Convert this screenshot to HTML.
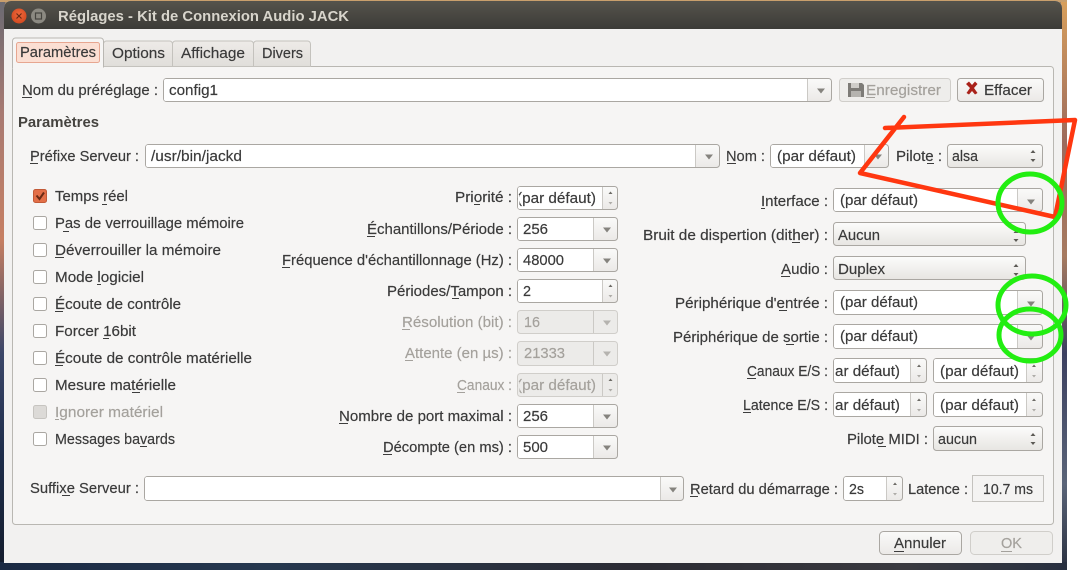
<!DOCTYPE html>
<html lang="fr"><head><meta charset="utf-8"><title>Réglages - Kit de Connexion Audio JACK</title>
<style>
html,body{margin:0;padding:0;background:#fff;width:1088px;height:576px;overflow:hidden}
svg{display:block}
text{font-family:"Liberation Sans",sans-serif;font-size:15px;fill:#3a3a3a;stroke:#3a3a3a;stroke-width:.18}
.d{fill:#a4a19c;stroke:#a4a19c}
.b{font-weight:bold;fill:#45433f;stroke:none}
.t{font-weight:bold;fill:#d8d5cc;stroke:none;font-size:14.5px}
.u{stroke:#3d3d3d;stroke-width:1;fill:none}
.ud{stroke:#a4a19c;stroke-width:1;fill:none}
.o{stroke:#aaa7a2;fill:url(#g)}
.s{stroke:#aaa7a2;fill:url(#g2)}
.od{stroke:#d0ceca;fill:#ecebe9}
.w{fill:#fff}
.l{stroke:#cbc9c5;stroke-width:1}
.cb{fill:#fff;stroke:#aaa7a2}
</style></head><body>
<svg xmlns="http://www.w3.org/2000/svg" width="1088" height="576" viewBox="0 0 1088 576">
<defs>
<linearGradient id="bgl" x1="0" y1="0" x2="0" y2="1"><stop offset="0" stop-color="#6a6a72"/><stop offset=".2" stop-color="#a87a72"/><stop offset=".42" stop-color="#c67f62"/><stop offset=".62" stop-color="#3b4668"/><stop offset=".8" stop-color="#1d2c4a"/><stop offset="1" stop-color="#141c2c"/></linearGradient>
<linearGradient id="bgr" x1="0" y1="0" x2="0" y2="1"><stop offset="0" stop-color="#d8a05c"/><stop offset=".25" stop-color="#9c6a5c"/><stop offset=".45" stop-color="#a67a60"/><stop offset=".62" stop-color="#3c4060"/><stop offset=".85" stop-color="#5a6478"/><stop offset="1" stop-color="#2a3040"/></linearGradient>
<linearGradient id="bgb" x1="0" y1="0" x2="1" y2="0"><stop offset="0" stop-color="#1b2a44"/><stop offset=".25" stop-color="#26384f"/><stop offset=".6" stop-color="#2c2c34"/><stop offset=".85" stop-color="#3a3a40"/><stop offset="1" stop-color="#283040"/></linearGradient>
<linearGradient id="tb" x1="0" y1="0" x2="0" y2="1"><stop offset="0" stop-color="#55534c"/><stop offset="1" stop-color="#3c3b37"/></linearGradient>
<linearGradient id="g" x1="0" y1="0" x2="0" y2="1"><stop offset="0" stop-color="#fafaf9"/><stop offset="1" stop-color="#ebe9e7"/></linearGradient>
<linearGradient id="g2" x1="0" y1="0" x2="0" y2="1"><stop offset="0" stop-color="#fcfcfb"/><stop offset="1" stop-color="#e7e5e2"/></linearGradient>
<linearGradient id="tab" x1="0" y1="0" x2="0" y2="1"><stop offset="0" stop-color="#eeebe8"/><stop offset="1" stop-color="#e0deda"/></linearGradient>
<radialGradient id="rc" cx=".5" cy=".4" r=".6"><stop offset="0" stop-color="#f0683c"/><stop offset="1" stop-color="#d24a20"/></radialGradient>
<path id="ar" d="M-4 -2.500h8l-4 5z" fill="#85837e"/>
<path id="ard" d="M-4 -2.500h8l-4 5z" fill="#b5b3af"/>
<g id="st"><path d="M-2.500 -3l2.500 -3l2.500 3z" fill="#5c5a55"/><path d="M-2.500 3l2.500 3l2.500 -3z" fill="#5c5a55"/></g>
<g id="sp"><path d="M-2 -4l2 -2.500l2 2.500z" fill="#6c6a65"/><path d="M-2 4l2 2.500l2 -2.500z" fill="#aeacA8"/></g>
</defs>

<!-- desktop -->
<rect x="0" y="0" width="1067" height="570" fill="#9d8466"/>
<rect x="0" y="0" width="5" height="570" fill="url(#bgl)"/>
<rect x="1061" y="0" width="6" height="570" fill="url(#bgr)"/>
<rect x="0" y="562" width="1067" height="8" fill="url(#bgb)"/>
<rect x="0" y="0" width="1067" height="2" fill="#c99f6c"/>

<!-- window -->
<path d="M4 563V8a7 7 0 0 1 7-7H1055a7 7 0 0 1 7 7V563z" fill="#f2f1f0"/>
<path d="M4 29V8a7 7 0 0 1 7-7H1055a7 7 0 0 1 7 7V29z" fill="url(#tb)"/>
<circle cx="19" cy="16" r="7.500" fill="url(#rc)"/>
<path d="M16.500 13.500l5 5M21.500 13.500l-5 5" stroke="#6a2a14" stroke-width="1.200"/>
<circle cx="38.500" cy="16" r="7.500" fill="#8b8981"/>
<rect x="35.500" y="13" width="6" height="6" fill="none" stroke="#45443f" stroke-width="1.200"/>
<text class="t" x="58" y="21" textLength="291" lengthAdjust="spacingAndGlyphs">Réglages - Kit de Connexion Audio JACK</text>

<!-- notebook -->
<rect x="12.500" y="66.500" width="1041" height="458" rx="3" fill="#f6f5f4" stroke="#b9b7b2"/>
<path d="M103.500 66.500V44a3 3 0 0 1 3-3H169.500a3 3 0 0 1 3 3V66.500z" fill="url(#tab)" stroke="#c4c2bd"/>
<path d="M172.500 66.500V44a3 3 0 0 1 3-3H250.500a3 3 0 0 1 3 3V66.500z" fill="url(#tab)" stroke="#c4c2bd"/>
<path d="M253.500 66.500V44a3 3 0 0 1 3-3H307.500a3 3 0 0 1 3 3V66.500z" fill="url(#tab)" stroke="#c4c2bd"/>
<path d="M12.500 68V41a3 3 0 0 1 3-3H100.500a3 3 0 0 1 3 3V67.500" fill="#f6f5f4" stroke="#b9b7b2"/>
<rect x="13" y="66" width="90" height="3" fill="#f6f5f4"/>
<rect x="16.500" y="42.500" width="83" height="20" rx="2" fill="#fbdfd3" stroke="#e7a690"/>
<text x="20" y="57" textLength="76" lengthAdjust="spacingAndGlyphs">Paramètres</text>
<text x="112" y="58" textLength="53" lengthAdjust="spacingAndGlyphs">Options</text>
<text x="181" y="58" textLength="64" lengthAdjust="spacingAndGlyphs">Affichage</text>
<text x="262" y="58" textLength="41" lengthAdjust="spacingAndGlyphs">Divers</text>

<!-- preset row -->
<text x="22" y="95" textLength="136" lengthAdjust="spacingAndGlyphs">Nom du préréglage :</text><path class="u" d="M22 97.500h10"/>
<rect class="o" x="163.500" y="78.500" width="668" height="23" rx="3"/><path class="w" d="M166 79h642v22H166a2 2 0 0 1-2-2V81a2 2 0 0 1 2-2z"/><path class="l" d="M807.500 79v22"/><use href="#ar" x="821" y="91"/>
<text x="169" y="95" textLength="49" lengthAdjust="spacingAndGlyphs">config1</text>
<rect x="839.500" y="78.500" width="111" height="23" rx="3" fill="#eeedeb" stroke="#d0ceca"/>
<path d="M848 83h14l2 2v12h-16z" fill="#7d7b77"/><rect x="851" y="83" width="8" height="5" fill="#cfcdc9"/><rect x="851" y="91" width="10" height="6" fill="#b5b3af"/>
<text class="d" x="866" y="95" textLength="75" lengthAdjust="spacingAndGlyphs">Enregistrer</text><path class="ud" d="M866 97.500h9"/>
<rect class="o" x="957.500" y="78.500" width="86" height="23" rx="3"/>
<path d="M966 84l3-2.500l3 3.500l3-3.500l2.500 2.500l-3.500 4l3.500 5l-2.500 1.500l-3-3.500l-3 3.500l-2.500-1.500l3.500-5z" fill="#a9221a"/>
<text x="984" y="95" textLength="48" lengthAdjust="spacingAndGlyphs">Effacer</text>

<text class="b" x="18" y="127" textLength="81" lengthAdjust="spacingAndGlyphs">Paramètres</text>

<!-- prefix row -->
<text x="30" y="161" textLength="109" lengthAdjust="spacingAndGlyphs">Préfixe Serveur :</text><path class="u" d="M30 163.500h8"/>
<rect class="o" x="145.500" y="144.500" width="574" height="23" rx="3"/><path class="w" d="M148 145h548v22H148a2 2 0 0 1-2-2V147a2 2 0 0 1 2-2z"/><path class="l" d="M695.500 145v22"/>
<text x="151" y="161" textLength="91" lengthAdjust="spacingAndGlyphs">/usr/bin/jackd</text><use href="#ar" x="709" y="157"/>
<text x="726" y="161" textLength="39" lengthAdjust="spacingAndGlyphs">Nom :</text><path class="u" d="M727 163.500h9"/>
<rect class="o" x="770.500" y="144.500" width="118" height="23" rx="3"/><path class="w" d="M773 145h91v22H773a2 2 0 0 1-2-2V147a2 2 0 0 1 2-2z"/><path class="l" d="M864.500 145v22"/>
<text x="777" y="161" textLength="79" lengthAdjust="spacingAndGlyphs">(par défaut)</text><use href="#ar" x="878" y="157"/>
<text x="896" y="161" textLength="46" lengthAdjust="spacingAndGlyphs">Pilote :</text><path class="u" d="M927 163.500h7"/>
<rect class="s" x="947.500" y="144.500" width="95" height="23" rx="3"/><text x="952" y="161" textLength="26" lengthAdjust="spacingAndGlyphs">alsa</text><use href="#st" x="1033" y="156"/>

<!-- checkboxes -->
<rect x="33.500" y="189.500" width="13" height="13" rx="2" fill="#e36f48" stroke="#c25a37"/>
<path d="M36.500 195.500l3 3.500l4.500-6.500" stroke="#6a2a14" stroke-width="2" fill="none"/>
<rect class="cb" x="33.500" y="216.500" width="13" height="13" rx="2"/>
<rect class="cb" x="33.500" y="243.500" width="13" height="13" rx="2"/>
<rect class="cb" x="33.500" y="270.500" width="13" height="13" rx="2"/>
<rect class="cb" x="33.500" y="297.500" width="13" height="13" rx="2"/>
<rect class="cb" x="33.500" y="324.500" width="13" height="13" rx="2"/>
<rect class="cb" x="33.500" y="351.500" width="13" height="13" rx="2"/>
<rect class="cb" x="33.500" y="378.500" width="13" height="13" rx="2"/>
<rect x="33.500" y="405.500" width="13" height="13" rx="2" fill="#dcdad7" stroke="#c6c4c0"/>
<rect class="cb" x="33.500" y="432.500" width="13" height="13" rx="2"/>
<text x="55" y="201" textLength="73" lengthAdjust="spacingAndGlyphs">Temps réel</text><path class="u" d="M102 204.500h5"/>
<text x="55" y="228" textLength="189" lengthAdjust="spacingAndGlyphs">Pas de verrouillage mémoire</text><path class="u" d="M63 231.500h6"/>
<text x="55" y="255" textLength="166" lengthAdjust="spacingAndGlyphs">Déverrouiller la mémoire</text><path class="u" d="M55 257.500h9"/>
<text x="55" y="282" textLength="89" lengthAdjust="spacingAndGlyphs">Mode logiciel</text><path class="u" d="M97 284.500h4"/>
<text x="55" y="309" textLength="126" lengthAdjust="spacingAndGlyphs">Écoute de contrôle</text><path class="u" d="M55 311.500h8"/>
<text x="55" y="336" textLength="81" lengthAdjust="spacingAndGlyphs">Forcer 16bit</text><path class="u" d="M103 338.500h6"/>
<text x="55" y="363" textLength="197" lengthAdjust="spacingAndGlyphs">Écoute de contrôle matérielle</text><path class="u" d="M55 365.500h8"/>
<text x="55" y="390" textLength="121" lengthAdjust="spacingAndGlyphs">Mesure matérielle</text><path class="u" d="M132 392.500h8"/>
<text class="d" x="55" y="417" textLength="108" lengthAdjust="spacingAndGlyphs">Ignorer matériel</text><path class="ud" d="M55 419.500h4"/>
<text x="55" y="444" textLength="120" lengthAdjust="spacingAndGlyphs">Messages bavards</text><path class="u" d="M140 446.500h7"/>

<!-- middle labels -->
<text x="455" y="202" textLength="57" lengthAdjust="spacingAndGlyphs">Priorité :</text><path class="u" d="M474 204.500h6"/>
<text x="367" y="234" textLength="145" lengthAdjust="spacingAndGlyphs">Échantillons/Période :</text><path class="u" d="M367 236.500h8"/>
<text x="282" y="265" textLength="230" lengthAdjust="spacingAndGlyphs">Fréquence d'échantillonnage (Hz) :</text><path class="u" d="M282 267.500h8"/>
<text x="387" y="296" textLength="125" lengthAdjust="spacingAndGlyphs">Périodes/Tampon :</text><path class="u" d="M452 298.500h7"/>
<text class="d" x="402" y="327" textLength="110" lengthAdjust="spacingAndGlyphs">Résolution (bit) :</text><path class="ud" d="M402 329.500h8"/>
<text class="d" x="405" y="358" textLength="107" lengthAdjust="spacingAndGlyphs">Attente (en µs) :</text><path class="ud" d="M405 360.500h8"/>
<text class="d" x="457" y="390" textLength="55" lengthAdjust="spacingAndGlyphs">Canaux :</text><path class="ud" d="M457 392.500h8"/>
<text x="339" y="421" textLength="173" lengthAdjust="spacingAndGlyphs">Nombre de port maximal :</text><path class="u" d="M339 423.500h9"/>
<text x="383" y="452" textLength="129" lengthAdjust="spacingAndGlyphs">Décompte (en ms) :</text><path class="u" d="M383 454.500h9"/>

<!-- middle controls -->
<rect class="o" x="517.500" y="186.500" width="100" height="23" rx="3"/><path class="w" d="M520 187h82v22H520a2 2 0 0 1-2-2V189a2 2 0 0 1 2-2z"/><path class="l" d="M602.500 187v22"/>
<text x="517" y="203" textLength="79" lengthAdjust="spacingAndGlyphs">(par défaut)</text><rect x="518" y="195" width="1.500" height="12" fill="#fff"/><use href="#sp" x="610.500" y="198"/>
<rect class="o" x="517.500" y="217.500" width="100" height="23" rx="3"/><path class="w" d="M520 218h73v22H520a2 2 0 0 1-2-2V220a2 2 0 0 1 2-2z"/><path class="l" d="M593.500 218v22"/><text x="523" y="234" textLength="25" lengthAdjust="spacingAndGlyphs">256</text><use href="#ar" x="607" y="230"/>
<rect class="o" x="517.500" y="248.500" width="100" height="23" rx="3"/><path class="w" d="M520 249h73v22H520a2 2 0 0 1-2-2V251a2 2 0 0 1 2-2z"/><path class="l" d="M593.500 249v22"/><text x="523" y="265" textLength="41" lengthAdjust="spacingAndGlyphs">48000</text><use href="#ar" x="607" y="261"/>
<rect class="o" x="517.500" y="279.500" width="100" height="23" rx="3"/><path class="w" d="M520 280h82v22H520a2 2 0 0 1-2-2V282a2 2 0 0 1 2-2z"/><path class="l" d="M602.500 280v22"/><text x="523" y="296" textLength="8" lengthAdjust="spacingAndGlyphs">2</text><use href="#sp" x="610.500" y="291"/>
<rect class="od" x="517.500" y="310.500" width="100" height="23" rx="3"/><path class="l" d="M593.500 311v22"/><text class="d" x="524" y="327" textLength="16" lengthAdjust="spacingAndGlyphs">16</text><use href="#ard" x="607" y="323"/>
<rect class="od" x="517.500" y="341.500" width="100" height="24" rx="3"/><path class="l" d="M593.500 342v23"/><text class="d" x="524" y="358" textLength="41" lengthAdjust="spacingAndGlyphs">21333</text><use href="#ard" x="607" y="354"/>
<rect class="od" x="517.500" y="373.500" width="100" height="23" rx="3"/><path class="l" d="M602.500 374v22"/><text class="d" x="517" y="390" textLength="79" lengthAdjust="spacingAndGlyphs">(par défaut)</text><rect x="518" y="382" width="1.500" height="12" fill="#ecebe9"/><use href="#sp" x="610.500" y="385"/>
<rect class="o" x="517.500" y="404.500" width="100" height="23" rx="3"/><path class="w" d="M520 405h73v22H520a2 2 0 0 1-2-2V407a2 2 0 0 1 2-2z"/><path class="l" d="M593.500 405v22"/><text x="523" y="421" textLength="25" lengthAdjust="spacingAndGlyphs">256</text><use href="#ar" x="607" y="417"/>
<rect class="o" x="517.500" y="435.500" width="100" height="23" rx="3"/><path class="w" d="M520 436h73v22H520a2 2 0 0 1-2-2V438a2 2 0 0 1 2-2z"/><path class="l" d="M593.500 436v22"/><text x="523" y="452" textLength="25" lengthAdjust="spacingAndGlyphs">500</text><use href="#ar" x="607" y="448"/>

<!-- right labels -->
<text x="761" y="206" textLength="67" lengthAdjust="spacingAndGlyphs">Interface :</text><path class="u" d="M761 208.500h4"/>
<text x="643" y="240" textLength="185" lengthAdjust="spacingAndGlyphs">Bruit de dispertion (dither) :</text><path class="u" d="M792 242.500h8"/>
<text x="781" y="274" textLength="47" lengthAdjust="spacingAndGlyphs">Audio :</text><path class="u" d="M781 276.500h9"/>
<text x="675" y="308" textLength="153" lengthAdjust="spacingAndGlyphs">Périphérique d'entrée :</text><path class="u" d="M779 310.500h8"/>
<text x="673" y="342" textLength="155" lengthAdjust="spacingAndGlyphs">Périphérique de sortie :</text><path class="u" d="M786 344.500h8"/>
<text x="747" y="376" textLength="81" lengthAdjust="spacingAndGlyphs">Canaux E/S :</text><path class="u" d="M747 378.500h9"/>
<text x="743" y="410" textLength="85" lengthAdjust="spacingAndGlyphs">Latence E/S :</text><path class="u" d="M743 412.500h8"/>
<text x="847" y="444" textLength="81" lengthAdjust="spacingAndGlyphs">Pilote MIDI :</text><path class="u" d="M878 446.500h8"/>

<!-- right controls -->
<rect class="o" x="833.500" y="188.500" width="209" height="23" rx="3"/><path class="w" d="M836 189h181v22H836a2 2 0 0 1-2-2V191a2 2 0 0 1 2-2z"/><path class="l" d="M1017.500 189v22"/><text x="840" y="205" textLength="78" lengthAdjust="spacingAndGlyphs">(par défaut)</text><use href="#ar" x="1031" y="202"/>
<rect class="s" x="833.500" y="222.500" width="192" height="23" rx="3"/><text x="838" y="240" textLength="42" lengthAdjust="spacingAndGlyphs">Aucun</text><use href="#st" x="1016" y="236"/>
<rect class="s" x="833.500" y="256.500" width="192" height="23" rx="3"/><text x="838" y="274" textLength="47" lengthAdjust="spacingAndGlyphs">Duplex</text><use href="#st" x="1016" y="270"/>
<rect class="o" x="833.500" y="290.500" width="209" height="24" rx="3"/><path class="w" d="M836 291h181v23H836a2 2 0 0 1-2-2V293a2 2 0 0 1 2-2z"/><path class="l" d="M1017.500 291v23"/><text x="840" y="307" textLength="78" lengthAdjust="spacingAndGlyphs">(par défaut)</text><use href="#ar" x="1031" y="304"/>
<rect class="o" x="833.500" y="324.500" width="209" height="24" rx="3"/><path class="w" d="M836 325h181v23H836a2 2 0 0 1-2-2V327a2 2 0 0 1 2-2z"/><path class="l" d="M1017.500 325v23"/><text x="840" y="341" textLength="78" lengthAdjust="spacingAndGlyphs">(par défaut)</text><use href="#ar" x="1031" y="338"/>
<rect class="o" x="833.500" y="358.500" width="93" height="24" rx="3"/><path class="w" d="M836 359h74v23H836a2 2 0 0 1-2-2V361a2 2 0 0 1 2-2z"/><path class="l" d="M910.500 359v23"/><text x="835" y="376" textLength="65" lengthAdjust="spacingAndGlyphs">ar défaut)</text><use href="#sp" x="919" y="371"/>
<rect class="o" x="933.500" y="358.500" width="109" height="24" rx="3"/><path class="w" d="M936 359h90v23H936a2 2 0 0 1-2-2V361a2 2 0 0 1 2-2z"/><path class="l" d="M1026.500 359v23"/><text x="940" y="376" textLength="79" lengthAdjust="spacingAndGlyphs">(par défaut)</text><use href="#sp" x="1034" y="371"/>
<rect class="o" x="833.500" y="392.500" width="93" height="24" rx="3"/><path class="w" d="M836 393h74v23H836a2 2 0 0 1-2-2V395a2 2 0 0 1 2-2z"/><path class="l" d="M910.500 393v23"/><text x="835" y="410" textLength="65" lengthAdjust="spacingAndGlyphs">ar défaut)</text><use href="#sp" x="919" y="405"/>
<rect class="o" x="933.500" y="392.500" width="109" height="24" rx="3"/><path class="w" d="M936 393h90v23H936a2 2 0 0 1-2-2V395a2 2 0 0 1 2-2z"/><path class="l" d="M1026.500 393v23"/><text x="940" y="410" textLength="79" lengthAdjust="spacingAndGlyphs">(par défaut)</text><use href="#sp" x="1034" y="405"/>
<rect class="s" x="933.500" y="426.500" width="109" height="24" rx="3"/><text x="938" y="444" textLength="39" lengthAdjust="spacingAndGlyphs">aucun</text><use href="#st" x="1033" y="439"/>

<!-- suffix row -->
<text x="30" y="493" textLength="109" lengthAdjust="spacingAndGlyphs">Suffixe Serveur :</text><path class="u" d="M62 495.500h8"/>
<rect class="o" x="144.500" y="476.500" width="539" height="24" rx="3"/><path class="w" d="M147 477h513v23H147a2 2 0 0 1-2-2V479a2 2 0 0 1 2-2z"/><path class="l" d="M660.500 477v23"/><use href="#ar" x="673" y="490"/>
<text x="690" y="494" textLength="148" lengthAdjust="spacingAndGlyphs">Retard du démarrage :</text><path class="u" d="M690 496.500h8"/>
<rect class="o" x="843.500" y="476.500" width="59" height="24" rx="3"/><path class="w" d="M846 477h40v23H846a2 2 0 0 1-2-2V479a2 2 0 0 1 2-2z"/><path class="l" d="M886.500 477v23"/><text x="849" y="494" textLength="15" lengthAdjust="spacingAndGlyphs">2s</text><use href="#sp" x="895" y="489"/>
<text x="908" y="494" textLength="60" lengthAdjust="spacingAndGlyphs">Latence :</text>
<rect x="972.500" y="475.500" width="71" height="26" fill="#f4f3f2" stroke="#c4c2be"/><text x="983" y="494" textLength="50" lengthAdjust="spacingAndGlyphs">10.7 ms</text>

<!-- bottom buttons -->
<rect class="o" x="879.500" y="531.500" width="82" height="23" rx="4"/><text x="894" y="548" textLength="52" lengthAdjust="spacingAndGlyphs">Annuler</text><path class="u" d="M894 551.500h10"/>
<rect x="970.500" y="531.500" width="82" height="23" rx="4" fill="#efeeec" stroke="#d0ceca"/><text class="d" x="1001" y="548" textLength="21" lengthAdjust="spacingAndGlyphs">OK</text><path class="ud" d="M1001 551.500h11"/>

<!-- annotations -->
<g fill="none" stroke-linecap="round" stroke-linejoin="round">
<path d="M904 117L860 173L1055 217L1075 120L885 128" stroke="#ff3710" stroke-width="4.500"/>
<ellipse cx="1030" cy="203" rx="32" ry="29" stroke="#22ee11" stroke-width="5"/>
<ellipse cx="1032" cy="305" rx="34" ry="29" stroke="#22ee11" stroke-width="5"/>
<ellipse cx="1030" cy="335" rx="31" ry="26" stroke="#22ee11" stroke-width="5"/>
</g>
</svg>
</body></html>
